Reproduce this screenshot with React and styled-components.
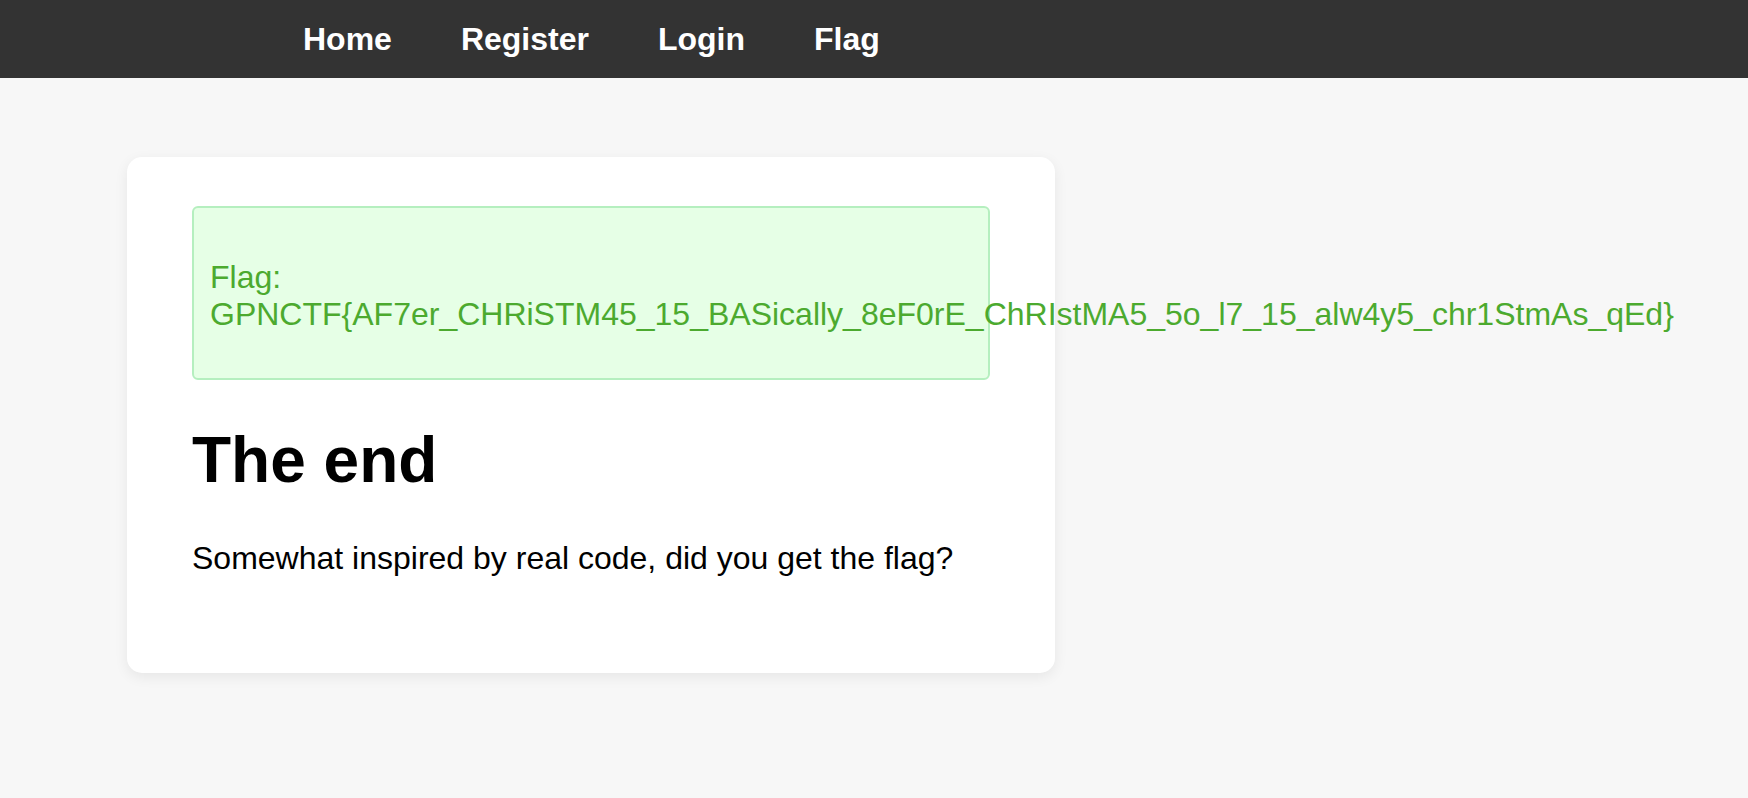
import styled, { createGlobalStyle } from "styled-components";

const GlobalStyle = createGlobalStyle`
  html, body {
    margin: 0;
    padding: 0;
    background: #f7f7f7;
    font-family: "Liberation Sans", Arial, sans-serif;
  }
`;

const links = ["Home", "Register", "Login", "Flag"];

const App = () => {
  return (
    <>
      <GlobalStyle />
      <Nav>
        {links.map((l) => (
          <NavLink key={l} href="#">
            {l}
          </NavLink>
        ))}
      </Nav>
      <Main>
        <Card>
          <FlagBox>
            <FlagText>
              Flag:
              <br />
              GPNCTF&#123;AF7er_CHRiSTM45_15_BASically_8eF0rE_ChRIstMA5_5o_l7_15_alw4y5_chr1StmAs_qEd&#125;
            </FlagText>
          </FlagBox>
          <Title>The end</Title>
          <Text>Somewhat inspired by real code, did you get the flag?</Text>
        </Card>
      </Main>
    </>
  );
};

const Nav = styled.nav`
  display: flex;
  align-items: center;
  gap: 69px;
  height: 78px;
  padding-left: 303px;
  background: #333333;
`;

const NavLink = styled.a`
  color: #ffffff;
  font-size: 32px;
  font-weight: bold;
  text-decoration: none;
`;

const Main = styled.main`
  padding: 79px 127px 60px;
`;

const Card = styled.div`
  width: 928px;
  box-sizing: border-box;
  padding: 49px 65px 64px;
  background: #ffffff;
  border-radius: 15px;
  box-shadow: 0 4px 14px rgba(0, 0, 0, 0.07);
`;

const FlagBox = styled.div`
  padding: 0 16px;
  background: #e6ffe6;
  border: 2px solid #b5efbf;
  border-radius: 6px;
  color: #4caa2f;
  display: flow-root;
`;

const FlagText = styled.p`
  margin: 51px 0 45px;
  font-size: 32px;
  line-height: 37px;
  white-space: nowrap;
`;

const Title = styled.h1`
  margin: 43px 0;
  font-size: 64px;
  font-weight: bold;
  color: #000;
`;

const Text = styled.p`
  margin: 0 0 32px;
  font-size: 32px;
  color: #000;
`;

export default App;
